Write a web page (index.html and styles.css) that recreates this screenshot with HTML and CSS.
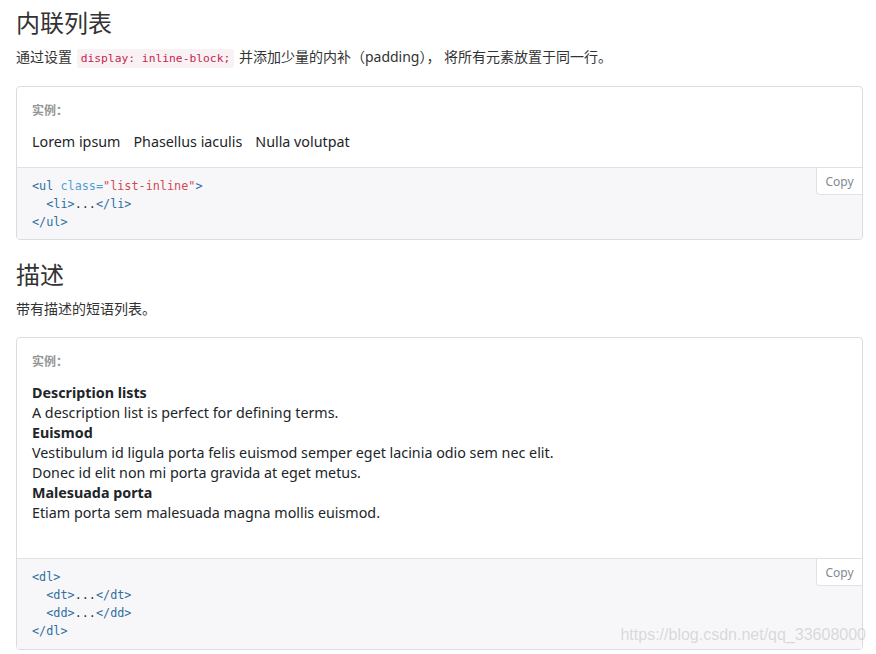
FILE: index.html
```html
<!DOCTYPE html>
<html lang="zh-CN">
<head>
<meta charset="utf-8">
<title>内联列表</title>
<link rel="stylesheet" href="styles.css">
</head>
<body>
<h2 class="title">内联列表</h2>
<p class="lead">通过设置 <code class="inline-code">display: inline-block;</code> 并添加少量的内补（padding）， 将所有元素放置于同一行。</p>
<div class="docs-box">
  <div class="example">
    <div class="example-label">实例：</div>
    <ul class="list-inline">
      <li>Lorem ipsum</li>
      <li>Phasellus iaculis</li>
      <li>Nulla volutpat</li>
    </ul>
  </div>
  <div class="code-area">
    <button class="copy-btn">Copy</button>
<pre class="code"><span class="tag">&lt;ul</span> <span class="attr">class=</span><span class="val">"list-inline"</span><span class="tag">&gt;</span>
  <span class="tag">&lt;li&gt;</span>...<span class="tag">&lt;/li&gt;</span>
<span class="tag">&lt;/ul&gt;</span></pre>
  </div>
</div>

<h2 class="title title-2">描述</h2>
<p class="lead">带有描述的短语列表。</p>
<div class="docs-box docs-box-2">
  <div class="example example-dl">
    <div class="example-label">实例：</div>
    <dl class="dl">
      <dt>Description lists</dt>
      <dd>A description list is perfect for defining terms.</dd>
      <dt>Euismod</dt>
      <dd>Vestibulum id ligula porta felis euismod semper eget lacinia odio sem nec elit.</dd>
      <dd>Donec id elit non mi porta gravida at eget metus.</dd>
      <dt>Malesuada porta</dt>
      <dd>Etiam porta sem malesuada magna mollis euismod.</dd>
    </dl>
  </div>
  <div class="code-area code-area-2">
    <button class="copy-btn">Copy</button>
<pre class="code"><span class="tag">&lt;dl&gt;</span>
  <span class="tag">&lt;dt&gt;</span>...<span class="tag">&lt;/dt&gt;</span>
  <span class="tag">&lt;dd&gt;</span>...<span class="tag">&lt;/dd&gt;</span>
<span class="tag">&lt;/dl&gt;</span></pre>
  </div>
</div>
<div class="watermark">https://blog.csdn.net/qq_33608000</div>
</body>
</html>
```
FILE: styles.css
```css
html, body {
  margin: 0;
  padding: 0;
  background: #fff;
}
body {
  padding: 0 13px 0 16px;
  font-family: "Noto Sans", "Noto Sans CJK SC", sans-serif;
  color: #333;
  position: relative;
  min-height: 654px;
  box-sizing: border-box;
}
.title {
  margin: 6px 0 0;
  font-size: 24px;
  line-height: 32px;
  font-weight: 400;
  color: #333;
  font-family: "Noto Sans CJK SC", sans-serif;
}
.title-2 {
  margin-top: 18px;
}
.lead {
  margin: 9px 0 0;
  height: 20px;
  font-size: 14px;
  line-height: 20px;
  color: #333;
  font-family: "Noto Sans", "Noto Sans CJK SC", sans-serif;
}
.inline-code {
  font-family: "DejaVu Sans Mono", monospace;
  font-size: 11.3px;
  line-height: 1;
  color: #c7254e;
  background: #f9f2f4;
  border-radius: 3px;
  padding: 3px 4px;
  margin: 0 1px;
}
.docs-box {
  margin-top: 19px;
  border: 1px solid #dcdcdc;
  border-radius: 4px;
  overflow: hidden;
}
.docs-box-2 {
  margin-top: 18px;
}
.example {
  padding: 14px 15px 15px;
  border-bottom: 1px solid #e1e1e8;
}
.example-dl {
  padding-bottom: 35px;
}
.example-label {
  font-size: 12px;
  line-height: 18px;
  font-weight: 700;
  color: #959595;
  font-family: "Noto Sans CJK SC", sans-serif;
}
.list-inline {
  list-style: none;
  margin: 13px 0 0;
  padding: 0;
  display: flex;
  gap: 13px;
  font-size: 14.3px;
  line-height: 20px;
  color: #212529;
}
.dl {
  margin: 13px 0 0;
  font-size: 14.3px;
  line-height: 20px;
  color: #212529;
}
.dl dt {
  font-weight: 700;
}
.dl dd {
  margin: 0;
}
.code-area {
  position: relative;
  background: #f7f7f9;
  padding: 9px 15px 8px;
}
.code-area-2 {
  padding-bottom: 9px;
}
.code {
  margin: 0;
  font-family: "DejaVu Sans Mono", monospace;
  font-size: 11.8px;
  line-height: 18px;
  color: #333;
}
.tag { color: #2f6f9f; }
.attr { color: #4f9fcf; }
.val { color: #d44950; }
.copy-btn {
  position: absolute;
  top: 0;
  right: 0;
  width: 46px;
  height: 27px;
  padding: 0;
  background: #fff;
  border: 1px solid #e1e1e8;
  border-top: 0;
  border-right: 0;
  border-radius: 0 0 0 4px;
  font-family: "Noto Sans", sans-serif;
  font-size: 12px;
  color: #818a91;
}
.watermark {
  position: absolute;
  right: 10px;
  top: 625px;
  font-family: "Liberation Sans", Arial, sans-serif;
  font-size: 16px;
  line-height: 20px;
  color: rgba(190, 190, 190, 0.55);
}
```
